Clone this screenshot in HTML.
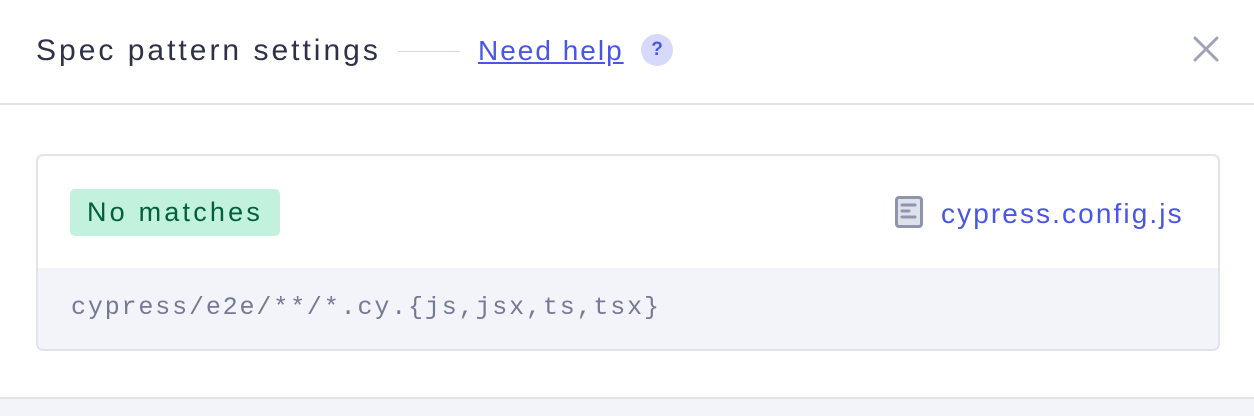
<!DOCTYPE html>
<html><head><style>
body{margin:0;width:1254px;height:416px;background:#fff;font-family:"Liberation Sans",sans-serif;position:relative;overflow:hidden}
.a{position:absolute;white-space:nowrap}
</style></head><body>
<div class="a" style="left:36px;top:31px;font-size:30px;letter-spacing:3px;color:#2e3247;line-height:40px">Spec pattern settings</div>
<div class="a" style="left:398px;top:51px;width:62px;height:1px;background:#d5d8e6"></div>
<div class="a" style="left:478px;top:31px;font-size:28px;letter-spacing:2px;color:#4956e3;text-decoration:underline;line-height:40px">Need help</div>
<div class="a" style="left:641px;top:34px;width:32px;height:32px;border-radius:50%;background:#d6d9fa;color:#4956e3;font-weight:bold;font-size:19px;text-align:center;line-height:32px">?</div>
<svg class="a" style="left:1193px;top:36px" width="26" height="26" viewBox="0 0 26 26"><path d="M2 2L24 24M24 2L2 24" stroke="#9fa3b8" stroke-width="3" stroke-linecap="round"/></svg>
<div class="a" style="left:0;top:103px;width:1254px;height:2px;background:#e1e3ed"></div>
<div class="a" style="left:36px;top:154px;width:1180px;height:193px;border:2px solid #e1e3ed;border-radius:7px;overflow:hidden">
 <div class="a" style="left:32px;top:33px;width:210px;height:47px;background:#c2f1de;border-radius:5px;color:#00603c;font-size:27px;letter-spacing:3.2px;line-height:47px;text-align:center">No matches</div>
 <svg class="a" style="left:857px;top:40px" width="30" height="33" viewBox="0 0 30 33"><rect x="1.5" y="1.5" width="25" height="29" rx="2.5" fill="#dfe1eb" stroke="#9095ad" stroke-width="3"/><path d="M7 9H20M7 15H14M7 21H20" stroke="#9095ad" stroke-width="3" stroke-linecap="round"/></svg>
 <div class="a" style="left:903px;top:38px;font-size:28px;letter-spacing:2.1px;color:#4956e3;line-height:40px">cypress.config.js</div>
 <div class="a" style="left:0;top:112px;width:1180px;height:81px;background:#f3f4fa"></div>
 <div class="a" style="left:33px;top:134px;font-family:'Liberation Mono',monospace;font-size:25px;letter-spacing:1.85px;color:#747994;line-height:36px">cypress/e2e/**/*.cy.{js,jsx,ts,tsx}</div>
</div>
<div class="a" style="left:0;top:397px;width:1254px;height:2px;background:#e1e3ed"></div>
<div class="a" style="left:0;top:399px;width:1254px;height:17px;background:#f3f4fa"></div>
</body></html>
